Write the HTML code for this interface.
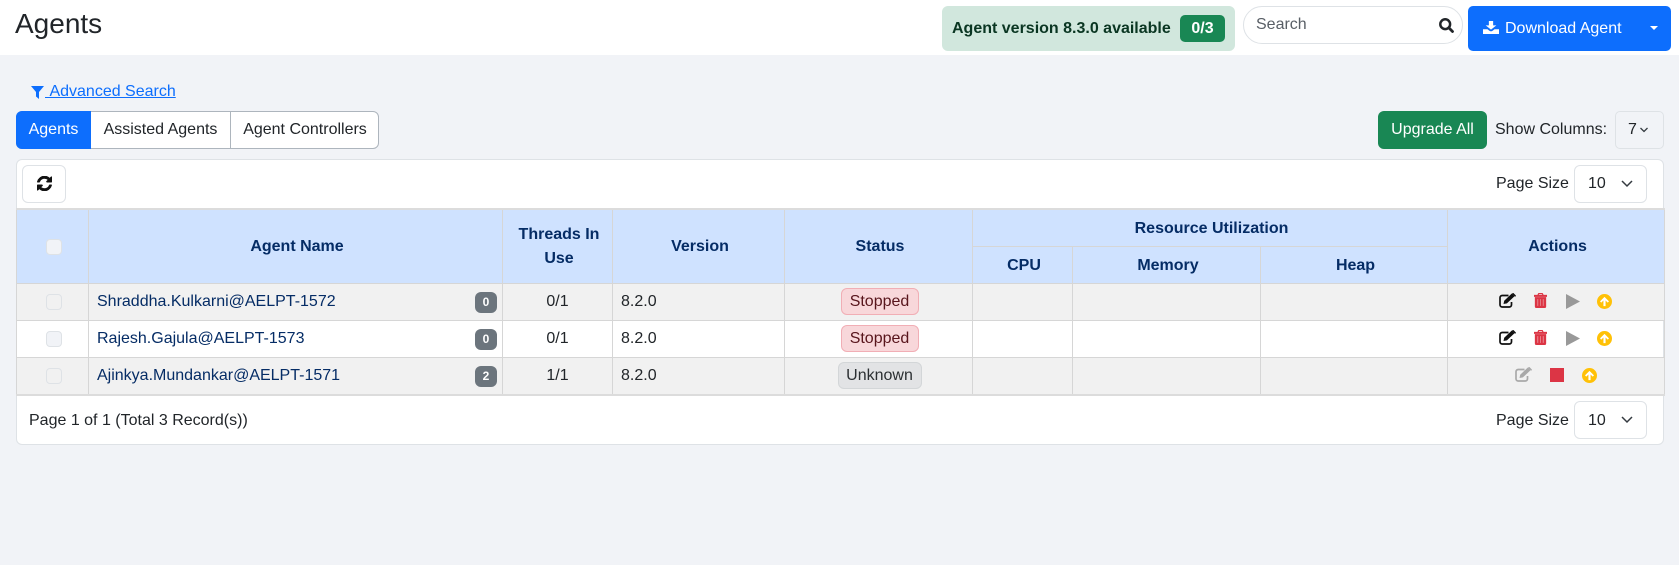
<!DOCTYPE html>
<html lang="en"><head><meta charset="utf-8"><title>Agents</title>
<style>
*{box-sizing:border-box}
html,body{margin:0;padding:0}
body{width:1679px;height:565px;overflow:hidden;position:relative;background:#f1f3f7;font-family:"Liberation Sans",sans-serif;font-size:16px;color:#212529}
.a{position:absolute;white-space:nowrap}
.c{display:flex;align-items:center;justify-content:center}
svg{display:block}
.sel{background:#fff;border:1px solid #dee2e6;border-radius:6px}
table{position:absolute;left:16px;top:208px;width:1648px;table-layout:fixed;border-collapse:collapse;border-top:2px solid #dcdcdc}
th,td{border:1px solid #d6d6d6;padding:0;height:37px;text-align:center;vertical-align:middle;line-height:24px;position:relative}
th{background:#cfe2ff;color:#052c65;font-weight:700;padding-left:3px;padding-top:2px}
td{color:#212529}
tbody tr:nth-child(odd) td{background:#f1f1f1}
tbody tr:last-child td{border-bottom:2px solid #dcdcdc}
tbody tr:last-child td{height:38px}
td.n{text-align:left;padding-left:8px;color:#052c65}
td.v{text-align:left;padding-left:8px}
td.s{padding-left:2px}
.ck{display:block;width:16px;height:16px;margin:auto;background:#f1f3f7;border:1px solid #dee2e6;border-radius:4px}
tbody .ck{position:relative;left:1px}
tbody tr:nth-child(odd) .ck{background:#f1f1f1}
.bd{position:absolute;right:5px;top:8px;width:22px;height:21px;background:#6c757d;color:#fff;border-radius:6px;font-size:12px;font-weight:700;line-height:21px;text-align:center}
.st{display:inline-block;height:27px;line-height:25px;border:1px solid;border-radius:6px;vertical-align:middle}
.stop{width:78px;background:#f8d7da;border-color:#f1aeb5;color:#58151c}
.unk{width:84px;background:#e2e3e5;border-color:#d3d6d8;color:#2b2f32}
.ic{position:absolute}
</style></head><body>

<div class="a" style="left:0;top:0;width:1679px;height:55px;background:#fff"></div>
<div class="a" style="left:15px;top:7px;font-size:28px;line-height:34px">Agents</div>

<div class="a" style="left:942px;top:6px;width:293px;height:45px;background:#d1e7dd;border-radius:6px"></div>
<div class="a" style="left:952px;top:17px;font-weight:700;font-size:16px;line-height:24px;color:#0a3622">Agent version 8.3.0 available</div>
<div class="a c" style="left:1180px;top:15px;width:45px;height:27px;background:#198754;color:#fff;font-weight:700;font-size:16px;border-radius:5px">0/3</div>

<div class="a" style="left:1243px;top:6px;width:220px;height:38px;background:#fff;border:1px solid #dee2e6;border-radius:19px"></div>
<div class="a" style="left:1256px;top:13px;line-height:24px;color:#595f66">Search</div>
<svg class="a" style="left:1439px;top:18px" width="15" height="15" viewBox="0 0 15 15"><circle cx="6.2" cy="6.2" r="4.9" fill="none" stroke="#212529" stroke-width="2.500"/><path d="M9.800 9.800L13.500 13.500" stroke="#212529" stroke-width="2.800" stroke-linecap="round"/></svg>

<div class="a" style="left:1468px;top:6px;width:203px;height:45px;background:#0d6efd;border-radius:5px"></div>
<svg class="a" style="left:1483px;top:20.500px" width="16" height="13" viewBox="0 0 15 15" preserveAspectRatio="none"><path fill="#fff" d="M5.500 0h4v5h3L7.500 10 2.500 5h3z"/><path fill="#fff" d="M0 9.500h4.200L6 11.300c.8.800 2.200.8 3 0l1.800-1.800H15V15H0z"/></svg>
<div class="a" style="left:1505px;top:17px;color:#fff;line-height:24px">Download Agent</div>
<div class="a" style="left:1650px;top:26px;width:0;height:0;border-left:4.500px solid transparent;border-right:4.500px solid transparent;border-top:4.500px solid #fff"></div>

<svg class="a" style="left:31px;top:85.500px" width="13" height="13" viewBox="0 0 13 13"><path fill="#0d6efd" d="M0 0h13L8 6v7L5 10.500V6z"/></svg>
<a class="a" style="left:45px;top:80px;line-height:24px;color:#0d6efd;text-decoration:underline" href="#">&nbsp;Advanced Search</a>

<div class="a" style="left:16px;top:111px;width:363px;height:38px;background:#fff;border:1px solid #adb5bd;border-radius:6px"></div>
<div class="a c" style="left:16px;top:111px;width:75px;height:38px;background:#0d6efd;color:#fff;border-radius:6px 0 0 6px">Agents</div>
<div class="a c" style="left:91px;top:111px;width:140px;height:38px;border-right:1px solid #adb5bd">Assisted Agents</div>
<div class="a c" style="left:231px;top:111px;width:148px;height:38px">Agent Controllers</div>

<div class="a c" style="left:1378px;top:111px;width:109px;height:38px;background:#198754;color:#fff;border-radius:6px">Upgrade All</div>
<div class="a" style="left:1495px;top:118px;line-height:24px">Show Columns:</div>
<div class="a" style="left:1615px;top:111px;width:49px;height:38px;border:1px solid #dee2e6;border-radius:5px"></div>
<div class="a" style="left:1628px;top:118px;line-height:24px">7</div>
<svg class="a" style="left:1639px;top:126px" width="10" height="8" viewBox="0 0 10 8"><path d="M1.500 2L5 5.500 8.500 2" fill="none" stroke="#343a40" stroke-width="1.300"/></svg>

<div class="a" style="left:16px;top:159px;width:1648px;height:286px;background:#fff;border:1px solid #dee2e6;border-radius:6px"></div>

<div class="a sel" style="left:22px;top:165px;width:44px;height:38px"></div>
<svg class="a" style="left:36.500px;top:176px" width="15" height="15" viewBox="0 0 1536 1536"><path fill="#111" stroke="#111" stroke-width="50" d="M1511 928q0 5-1 7-64 268-268 434.500T764 1536q-146 0-282.500-55T238 1324l-129 129q-19 19-45 19t-45-19-19-45V960q0-26 19-45t45-19h448q26 0 45 19t19 45-19 45l-137 137q71 66 161 102t187 36q134 0 250-65t186-179q11-17 53-117 8-23 30-23h192q13 0 22.500 9.500t9.500 22.500zm25-800v448q0 26-19 45t-45 19h-448q-26 0-45-19t-19-45 19-45l138-138q-148-137-349-137-134 0-250 65T332 500q-11 17-53 117-8 23-30 23H50q-13 0-22.500-9.500T18 608v-7q65-268 270-434.500T768 0q146 0 284 55.500T1297 212l130-129q19-19 45-19t45 19 19 45z"/></svg>

<div class="a" style="left:1496px;top:172px;line-height:24px">Page Size</div>
<div class="a sel" style="left:1574px;top:165px;width:73px;height:38px"></div>
<div class="a" style="left:1588px;top:172px;line-height:24px">10</div>
<svg class="a" style="left:1620px;top:178px" width="14" height="12" viewBox="0 0 14 12"><path d="M2 3l5 5 5-5" fill="none" stroke="#343a40" stroke-width="1.500"/></svg>

<table>
<colgroup><col style="width:72px"><col style="width:414px"><col style="width:110px"><col style="width:172px"><col style="width:188px"><col style="width:100px"><col style="width:188px"><col style="width:187px"><col style="width:217px"></colgroup>
<thead>
<tr><th rowspan="2"><span class="ck" style="background:#f1f3f7"></span></th><th rowspan="2">Agent Name</th><th rowspan="2">Threads In<br>Use</th><th rowspan="2">Version</th><th rowspan="2">Status</th><th colspan="3">Resource Utilization</th><th rowspan="2">Actions</th></tr>
<tr><th>CPU</th><th>Memory</th><th>Heap</th></tr>
</thead>
<tbody>
<tr><td><span class="ck"></span></td><td class="n">Shraddha.Kulkarni@AELPT-1572<span class="bd">0</span></td><td>0/1</td><td class="v">8.2.0</td><td class="s"><span class="st stop">Stopped</span></td><td></td><td></td><td></td><td></td></tr>
<tr><td><span class="ck"></span></td><td class="n">Rajesh.Gajula@AELPT-1573<span class="bd">0</span></td><td>0/1</td><td class="v">8.2.0</td><td class="s"><span class="st stop">Stopped</span></td><td></td><td></td><td></td><td></td></tr>
<tr><td><span class="ck"></span></td><td class="n">Ajinkya.Mundankar@AELPT-1571<span class="bd">2</span></td><td>1/1</td><td class="v">8.2.0</td><td class="s"><span class="st unk">Unknown</span></td><td></td><td></td><td></td><td></td></tr>
</tbody>
</table>

<svg width="0" height="0" style="position:absolute"><defs>
<symbol id="edit" viewBox="0 0 17 15"><path d="M12.500 9v2.800A2.200 2.200 0 0 1 10.300 14H3.200A2.200 2.200 0 0 1 1 11.800V4.700A2.200 2.200 0 0 1 3.200 2.500H9.500" fill="none" stroke="currentColor" stroke-width="1.700"/><path d="M4.500 11l.7-3.300L12.800.5l2.700 2.700-7.600 7.200zM13.700 0l.6-.1 2.600 2.600-.1.600-.7.700-3-3z" fill="currentColor"/></symbol>
<symbol id="trash" viewBox="0 0 13 15"><path fill="#dc3545" stroke="#dc3545" stroke-width=".3" fill-rule="evenodd" d="M4.500 0h4l1 2H13v1.800H0V2h3.500zM5 1L4.700 2h3.600L8 1zM1 4.300h11V13.500A1.500 1.500 0 0 1 10.500 15h-8A1.500 1.500 0 0 1 1 13.500zM3.500 6v7h.7V6zM6.150 6v7h.7V6zM8.800 6v7h.7V6z"/></symbol>
<symbol id="up" viewBox="0 0 14 14"><circle cx="7" cy="7" r="7" fill="#ffc107"/><path d="M7 2.700L2.800 6.900 4 8.100l2-2V11.300h2V6.100l2 2 1.200-1.200z" fill="#fff"/></symbol>
</defs></svg>

<svg class="ic" style="left:1499px;top:293px;color:#111" width="17" height="15"><use href="#edit"/></svg>
<svg class="ic" style="left:1534px;top:293px" width="13" height="15"><use href="#trash"/></svg>
<svg class="ic" style="left:1566px;top:294px" width="14" height="15" viewBox="0 0 14 14" preserveAspectRatio="none"><path d="M0 0l14 7-14 7z" fill="#999"/></svg>
<svg class="ic" style="left:1597px;top:294px" width="15" height="15"><use href="#up"/></svg>

<svg class="ic" style="left:1499px;top:330px;color:#111" width="17" height="15"><use href="#edit"/></svg>
<svg class="ic" style="left:1534px;top:330px" width="13" height="15"><use href="#trash"/></svg>
<svg class="ic" style="left:1566px;top:331px" width="14" height="15" viewBox="0 0 14 14" preserveAspectRatio="none"><path d="M0 0l14 7-14 7z" fill="#999"/></svg>
<svg class="ic" style="left:1597px;top:331px" width="15" height="15"><use href="#up"/></svg>

<svg class="ic" style="left:1515px;top:367px;color:#a9a9a9" width="17" height="15"><use href="#edit"/></svg>
<div class="ic" style="left:1550px;top:368px;width:14px;height:14px;background:#dc3545"></div>
<svg class="ic" style="left:1581.500px;top:368px" width="15" height="15"><use href="#up"/></svg>

<div class="a" style="left:29px;top:408.500px;line-height:24px">Page 1 of 1 (Total 3 Record(s))</div>
<div class="a" style="left:1496px;top:408.500px;line-height:24px">Page Size</div>
<div class="a sel" style="left:1574px;top:401px;width:73px;height:38px"></div>
<div class="a" style="left:1588px;top:408.500px;line-height:24px">10</div>
<svg class="a" style="left:1620px;top:414px" width="14" height="12" viewBox="0 0 14 12"><path d="M2 3l5 5 5-5" fill="none" stroke="#343a40" stroke-width="1.500"/></svg>

</body></html>
